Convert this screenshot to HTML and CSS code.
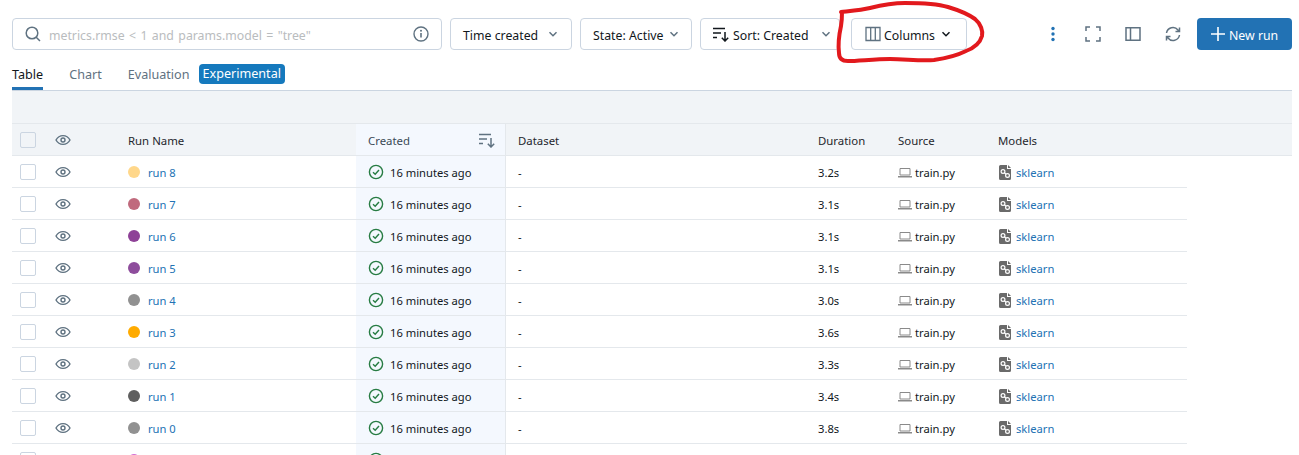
FILE: index.html
```html
<!DOCTYPE html>
<html lang="en">
<head>
    <meta charset="UTF-8">
    <title>Runs</title>
    <link rel="stylesheet" href="styles.css">
</head>
<body>
    <svg class="defs" width="0" height="0">
        <symbol id="chev" viewBox="0 0 12 12"><path d="M2.500 4.200 6 7.700l3.500-3.500" fill="none" stroke="currentColor" stroke-width="1.500"/></symbol>
        <symbol id="sort" viewBox="0 0 16 16"><path d="M0 2.500h12M0 7h8M0 11.500h4M12 6v9M8.800 11.800 12 15l3.200-3.200" fill="none" stroke="currentColor" stroke-width="1.500"/></symbol>
        <symbol id="eye" viewBox="0 0 16 16"><path d="M1 8c1.600-2.900 4-4.400 7-4.400s5.400 1.500 7 4.400c-1.600 2.900-4 4.400-7 4.400S2.600 10.900 1 8z" fill="none" stroke="currentColor" stroke-width="1.400"/><circle cx="8" cy="8" r="2" fill="none" stroke="currentColor" stroke-width="1.400"/></symbol>
        <symbol id="ok" viewBox="0 0 16 16"><circle cx="8" cy="8" r="6.600" fill="none" stroke="currentColor" stroke-width="1.400"/><path d="M5 8.200 7.200 10.300 11 6" fill="none" stroke="currentColor" stroke-width="1.400"/></symbol>
        <symbol id="laptop" viewBox="0 0 14 12"><path d="M2 2.500h10v6.500H2z" fill="none" stroke="currentColor"/><path d="M0 10h14v1.500H0z" fill="currentColor"/></symbol>
        <symbol id="model" viewBox="0 0 12 15"><path d="M1.500 0H8v4h4v9.500a1.500 1.500 0 0 1-1.500 1.500h-9A1.500 1.500 0 0 1 0 13.500v-12A1.500 1.500 0 0 1 1.500 0z" fill="currentColor"/><path d="M9 0l3 3H9z" fill="currentColor"/><path d="M4 6.500 8.500 10.500" stroke="#fff" stroke-width="1.200"/><circle cx="4" cy="6.500" r="1.900" fill="currentColor" stroke="#fff" stroke-width="1.200"/><circle cx="8.500" cy="10.500" r="1.900" fill="currentColor" stroke="#fff" stroke-width="1.200"/></symbol>
    </svg>

    <div class="toolbar">
        <div class="search">
            <svg class="search-icon" width="16" height="16" viewBox="0 0 16 16"><circle cx="7" cy="7" r="5.800" fill="none" stroke="currentColor" stroke-width="1.500"/><path d="M11.200 11.200 15 15" stroke="currentColor" stroke-width="1.500"/></svg>
            <span class="placeholder">metrics.rmse &lt; 1 and params.model = "tree"</span>
            <svg class="info" width="16" height="16" viewBox="0 0 16 16"><circle cx="8" cy="8" r="7" fill="none" stroke="currentColor" stroke-width="1.400"/><path d="M8 7v4.500" stroke="currentColor" stroke-width="1.600"/><circle cx="8" cy="4.800" r="1" fill="currentColor"/></svg>
        </div>
        <button class="btn btn-time"><span>Time created</span> <svg class="chev" width="12" height="12"><use href="#chev"/></svg></button>
        <button class="btn btn-state"><span>State: Active</span> <svg class="chev" width="12" height="12"><use href="#chev"/></svg></button>
        <button class="btn btn-sort"><svg class="sort-icon" width="16" height="16"><use href="#sort"/></svg> <span>Sort: Created</span> <svg class="chev" width="12" height="12"><use href="#chev"/></svg></button>
        <button class="btn btn-cols"><svg class="cols-icon" width="16" height="16" viewBox="0 0 16 16"><path d="M1 1.500h14v13H1zM5.700 1.500v13M10.300 1.500v13" fill="none" stroke="currentColor" stroke-width="1.300"/></svg> <span>Columns</span> <svg class="chev dark" width="12" height="12"><use href="#chev"/></svg></button>
        <div class="tools">
            <svg class="kebab" width="16" height="16" viewBox="0 0 16 16"><circle cx="8" cy="2.500" r="1.700"/><circle cx="8" cy="8" r="1.700"/><circle cx="8" cy="13.500" r="1.700"/></svg>
            <svg width="16" height="16" viewBox="0 0 16 16"><path d="M1 5V1h4M11 1h4v4M15 11v4h-4M5 15H1v-4" fill="none" stroke="currentColor" stroke-width="1.500"/></svg>
            <svg width="16" height="16" viewBox="0 0 16 16"><path d="M1 1.700h14v12.600H1zM5.500 1.700v12.600" fill="none" stroke="currentColor" stroke-width="1.500"/></svg>
            <svg width="16" height="16" viewBox="0 0 16 16"><path d="M1.500 7A6.500 6.500 0 0 1 13 4l1.500 1.500M14.500 1.500v4h-4M14.500 9A6.500 6.500 0 0 1 3 12l-1.500-1.500M1.500 14.500v-4h4" fill="none" stroke="currentColor" stroke-width="1.500"/></svg>
        </div>
        <button class="btn-new"><svg width="16" height="16" viewBox="0 0 16 16"><path d="M8 1v14M1 8h14" stroke="currentColor" stroke-width="1.600"/></svg> <span>New run</span></button>
    </div>

    <div class="tabs">
        <span class="tab active">Table</span>
        <span class="tab">Chart</span>
        <span class="tab tab-eval">Evaluation</span>
        <span class="tag">Experimental</span>
    </div>

    <div class="band"></div>

    <div class="row head">
        <div class="c-check"><span class="box"></span></div>
        <div class="c-eye"><svg width="16" height="16"><use href="#eye"/></svg></div>
        <div class="c-name">Run Name</div>
        <div class="c-created">Created <svg class="head-sort" width="16" height="16"><use href="#sort"/></svg></div>
        <div class="c-data">Dataset</div>
        <div class="c-dur">Duration</div>
        <div class="c-src">Source</div>
        <div class="c-model">Models</div>
    </div>

    <div class="row">
        <div class="c-check"><span class="box"></span></div>
        <div class="c-eye"><svg width="16" height="16"><use href="#eye"/></svg></div>
        <div class="c-name"><span class="dot d8"></span><a>run 8</a></div>
        <div class="c-created"><svg class="ok" width="16" height="16"><use href="#ok"/></svg>16 minutes ago</div>
        <div class="c-data">-</div>
        <div class="c-dur">3.2s</div>
        <div class="c-src"><svg class="laptop" width="14" height="12"><use href="#laptop"/></svg>train.py</div>
        <div class="c-model"><svg class="model" width="12" height="15"><use href="#model"/></svg><a>sklearn</a></div>
    </div>
    <div class="row">
        <div class="c-check"><span class="box"></span></div>
        <div class="c-eye"><svg width="16" height="16"><use href="#eye"/></svg></div>
        <div class="c-name"><span class="dot d7"></span><a>run 7</a></div>
        <div class="c-created"><svg class="ok" width="16" height="16"><use href="#ok"/></svg>16 minutes ago</div>
        <div class="c-data">-</div>
        <div class="c-dur">3.1s</div>
        <div class="c-src"><svg class="laptop" width="14" height="12"><use href="#laptop"/></svg>train.py</div>
        <div class="c-model"><svg class="model" width="12" height="15"><use href="#model"/></svg><a>sklearn</a></div>
    </div>
    <div class="row">
        <div class="c-check"><span class="box"></span></div>
        <div class="c-eye"><svg width="16" height="16"><use href="#eye"/></svg></div>
        <div class="c-name"><span class="dot d6"></span><a>run 6</a></div>
        <div class="c-created"><svg class="ok" width="16" height="16"><use href="#ok"/></svg>16 minutes ago</div>
        <div class="c-data">-</div>
        <div class="c-dur">3.1s</div>
        <div class="c-src"><svg class="laptop" width="14" height="12"><use href="#laptop"/></svg>train.py</div>
        <div class="c-model"><svg class="model" width="12" height="15"><use href="#model"/></svg><a>sklearn</a></div>
    </div>
    <div class="row">
        <div class="c-check"><span class="box"></span></div>
        <div class="c-eye"><svg width="16" height="16"><use href="#eye"/></svg></div>
        <div class="c-name"><span class="dot d5"></span><a>run 5</a></div>
        <div class="c-created"><svg class="ok" width="16" height="16"><use href="#ok"/></svg>16 minutes ago</div>
        <div class="c-data">-</div>
        <div class="c-dur">3.1s</div>
        <div class="c-src"><svg class="laptop" width="14" height="12"><use href="#laptop"/></svg>train.py</div>
        <div class="c-model"><svg class="model" width="12" height="15"><use href="#model"/></svg><a>sklearn</a></div>
    </div>
    <div class="row">
        <div class="c-check"><span class="box"></span></div>
        <div class="c-eye"><svg width="16" height="16"><use href="#eye"/></svg></div>
        <div class="c-name"><span class="dot d4"></span><a>run 4</a></div>
        <div class="c-created"><svg class="ok" width="16" height="16"><use href="#ok"/></svg>16 minutes ago</div>
        <div class="c-data">-</div>
        <div class="c-dur">3.0s</div>
        <div class="c-src"><svg class="laptop" width="14" height="12"><use href="#laptop"/></svg>train.py</div>
        <div class="c-model"><svg class="model" width="12" height="15"><use href="#model"/></svg><a>sklearn</a></div>
    </div>
    <div class="row">
        <div class="c-check"><span class="box"></span></div>
        <div class="c-eye"><svg width="16" height="16"><use href="#eye"/></svg></div>
        <div class="c-name"><span class="dot d3"></span><a>run 3</a></div>
        <div class="c-created"><svg class="ok" width="16" height="16"><use href="#ok"/></svg>16 minutes ago</div>
        <div class="c-data">-</div>
        <div class="c-dur">3.6s</div>
        <div class="c-src"><svg class="laptop" width="14" height="12"><use href="#laptop"/></svg>train.py</div>
        <div class="c-model"><svg class="model" width="12" height="15"><use href="#model"/></svg><a>sklearn</a></div>
    </div>
    <div class="row">
        <div class="c-check"><span class="box"></span></div>
        <div class="c-eye"><svg width="16" height="16"><use href="#eye"/></svg></div>
        <div class="c-name"><span class="dot d2"></span><a>run 2</a></div>
        <div class="c-created"><svg class="ok" width="16" height="16"><use href="#ok"/></svg>16 minutes ago</div>
        <div class="c-data">-</div>
        <div class="c-dur">3.3s</div>
        <div class="c-src"><svg class="laptop" width="14" height="12"><use href="#laptop"/></svg>train.py</div>
        <div class="c-model"><svg class="model" width="12" height="15"><use href="#model"/></svg><a>sklearn</a></div>
    </div>
    <div class="row">
        <div class="c-check"><span class="box"></span></div>
        <div class="c-eye"><svg width="16" height="16"><use href="#eye"/></svg></div>
        <div class="c-name"><span class="dot d1"></span><a>run 1</a></div>
        <div class="c-created"><svg class="ok" width="16" height="16"><use href="#ok"/></svg>16 minutes ago</div>
        <div class="c-data">-</div>
        <div class="c-dur">3.4s</div>
        <div class="c-src"><svg class="laptop" width="14" height="12"><use href="#laptop"/></svg>train.py</div>
        <div class="c-model"><svg class="model" width="12" height="15"><use href="#model"/></svg><a>sklearn</a></div>
    </div>
    <div class="row">
        <div class="c-check"><span class="box"></span></div>
        <div class="c-eye"><svg width="16" height="16"><use href="#eye"/></svg></div>
        <div class="c-name"><span class="dot d4"></span><a>run 0</a></div>
        <div class="c-created"><svg class="ok" width="16" height="16"><use href="#ok"/></svg>16 minutes ago</div>
        <div class="c-data">-</div>
        <div class="c-dur">3.8s</div>
        <div class="c-src"><svg class="laptop" width="14" height="12"><use href="#laptop"/></svg>train.py</div>
        <div class="c-model"><svg class="model" width="12" height="15"><use href="#model"/></svg><a>sklearn</a></div>
    </div>
    <div class="row">
        <div class="c-check"><span class="box"></span></div>
        <div class="c-eye"><svg width="16" height="16"><use href="#eye"/></svg></div>
        <div class="c-name"><span class="dot d9"></span></div>
        <div class="c-created"><svg class="ok" width="16" height="16"><use href="#ok"/></svg></div>
        <div class="c-data"></div>
        <div class="c-dur"></div>
        <div class="c-src"></div>
        <div class="c-model"></div>
    </div>

    <!-- red marker drawn on top of the screenshot -->
    <svg class="marker" width="1299" height="70" viewBox="0 0 1299 70"><path d="M841 12C850 11 862 10 870 8C882 5 892 3 905 3C920 3 938 4 948 7C958 10 968 14 975 19C981 24 983 31 982 36C980 43 974 48 966 51C958 55 948 58 934 60C920 61 905 59 890 59C875 59 858 61 848 61C842 61 839 58 839 53C838 45 839 35 841 26C842 20 842 16 842 12" fill="none" stroke="#e2191d" stroke-width="4" stroke-linecap="round" stroke-linejoin="round"/></svg>
</body>
</html>
```

FILE: styles.css
```css
*{
    margin:0;
    padding:0;
    box-sizing:border-box;
}
html,body{
    height:455px;
    overflow:hidden;
}
body{
    position:relative;
    background:#fff;
    color:#11171c;
    font-family:"Noto Sans","Open Sans",sans-serif;
    font-size:11.2px;
}
.defs{
    position:absolute;
}
svg{
    flex:none;
}

.toolbar{
    display:flex;
    align-items:center;
    height:32px;
    margin-top:18px;
    padding-left:12px;
    font-size:12.3px;
}
.toolbar span{
    position:relative;
    top:1px;
}
.search{
    display:flex;
    align-items:center;
    width:430px;
    height:32px;
    padding:0 12px;
    border:1px solid #cbd5e1;
    border-radius:4px;
}
.search-icon,.info{
    color:#5f7281;
}
.placeholder{
    flex:1;
    margin-left:8px;
    color:#b9bcbe;
    font-size:12.3px;
    word-spacing:1.2px;
}
.btn{
    display:flex;
    align-items:center;
    height:32px;
    margin-left:8px;
    padding:0 11px 0 12px;
    background:#fff;
    border:1px solid #cbd5e1;
    border-radius:4px;
    color:#11171c;
    font:inherit;
}
.btn-time{width:122px;padding-right:12px;}
.btn-state{width:112px;}
.btn-sort{width:140px;padding-right:7px;}
.btn-cols{width:116px;margin-left:11px;padding-left:13px;padding-right:14px;}
.chev{
    margin-left:auto;
    color:#5f7281;
}
.chev.dark{color:#11171c;}
.sort-icon{margin-right:4px;}
.cols-icon{margin-right:3px;color:#5f7281;}
.tools{
    display:flex;
    align-items:center;
    gap:24px;
    margin-left:78px;
    color:#5f7281;
}
.kebab{fill:#2272b4;}
.btn-new{
    display:flex;
    align-items:center;
    gap:3px;
    width:95px;
    height:32px;
    margin-left:16px;
    padding-left:13px;
    background:#2272b4;
    border:none;
    border-radius:4px;
    color:#fff;
    font:inherit;
}

.tabs{
    display:flex;
    align-items:flex-start;
    height:26px;
    margin:15px 7px 0 12px;
    border-bottom:1px solid #cbd5e1;
    font-size:12.6px;
    line-height:20px;
}
.tab{
    height:25px;
    margin-right:26px;
    color:#5f7281;
}
.tab-eval{margin-right:9px;}
.tab.active{
    color:#11171c;
    border-bottom:3px solid #2272b4;
}
.tag{
    height:20px;
    margin-top:-1px;
    padding:0 4px;
    background:#1579bd;
    border-radius:4px;
    color:#fff;
}

.band{
    height:33px;
    margin:0 7px 0 12px;
    background:#f1f4f7;
    border-bottom:1px solid #e4e8ec;
}

.row{
    display:grid;
    grid-template-columns:32px 84px 228px 150px 300px 80px 100px 201px;
    width:1175px;
    height:32px;
    margin-left:12px;
    border-bottom:1px solid #e4e8ec;
    align-items:stretch;
}
.row > div{
    display:flex;
    align-items:center;
    padding-top:1px;
}
.head{
    width:1280px;
    background:#f1f4f7;
    grid-template-columns:32px 84px 228px 150px 300px 80px 100px 306px;
    color:#1f272d;
    font-size:11.4px;
}
.box{
    display:block;
    width:16px;
    height:16px;
    margin-left:8px;
    background:#fff;
    border:1px solid #cbd5e1;
    border-radius:2px;
}
.head .box{background:#f1f4f7;}
.row .c-eye{
    padding-left:11px;
    color:#5f7281;
}
.c-eye svg{width:16px;}
.dot{
    display:block;
    width:12px;
    height:12px;
    margin-right:8px;
    border-radius:50%;
}
.d1{background:#5f5f5f;}
.d2{background:#c4c4c4;}
.d3{background:#ffab00;}
.d4{background:#919191;}
.d5{background:#8e4d9c;}
.d6{background:#8e4197;}
.d7{background:#c06a7d;}
.d8{background:#ffd78a;}
.d9{background:#d36fd3;}
a{color:#2272b4;}
.row .c-created{
    padding-left:12px;
    padding-right:12px;
    background:#f4f8fe;
    border-right:1px solid #e4e8ec;
}
.head .c-created{
    justify-content:space-between;
    padding-right:10px;
    color:#3a4a56;
}
.head-sort{color:#5f7281;}
.ok{
    margin-right:6px;
    color:#277c43;
}
.row .c-data,.row .c-dur,.row .c-src,.row .c-model{
    padding-left:12px;
}
.laptop{
    margin-right:3px;
    color:#8a8a8a;
}
.row .c-model .model{
    margin:0 5px 0 1px;
    color:#6a6a6a;
}

.marker{
    position:absolute;
    left:0;
    top:0;
}
```
